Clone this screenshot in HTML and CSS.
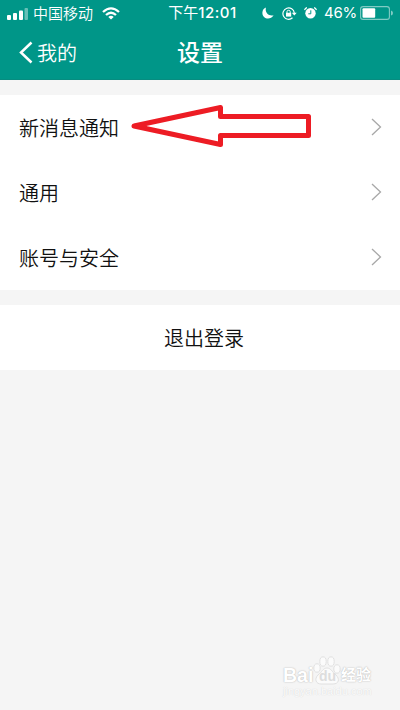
FILE: index.html
```html
<!DOCTYPE html>
<html lang="zh-CN">
<head>
<meta charset="utf-8">
<title>设置</title>
<link rel="stylesheet" href="styles.css">
</head>
<body>
<div class="screen">
  <header class="header">
    <div class="status">
      <div class="status-left">
        <svg class="signal" width="21" height="12" viewBox="0 0 21 12" fill="#fff"><rect x="0" y="7" width="4" height="5" rx="1"/><rect x="6" y="5" width="4" height="7" rx="1"/><rect x="12" y="2.500" width="4" height="9.500" rx="1"/><rect x="17.500" y="0" width="3.500" height="12" rx="1" opacity=".4"/></svg>
        <span class="carrier">中国移动</span>
        <svg class="wifi" width="18" height="13" viewBox="0 0 18 13" fill="none" stroke="#fff" stroke-width="2.300"><path d="M1 5Q9-2.300 17 5M4 8Q9 3.500 14 8"/><path d="M6.300 9.900Q9 7.500 11.700 9.900L9 12.600Z" fill="#fff" stroke="none"/></svg>
      </div>
      <span class="time">下午<b>12:01</b></span>
      <div class="status-right">
        <svg width="12" height="12" viewBox="0 0 12 12" fill="#fff"><path d="M4 .5C2.600 5.500 6.500 9.500 11.600 8.200C8 14 0 11.500.4 5.500C.5 3 2 1.200 4 .5Z"/></svg>
        <svg class="lock" width="15" height="13" viewBox="0 0 15 13" fill="none" stroke="#fff"><path d="M12.300 6A5.700 5.700 0 1 0 10.500 10.800" stroke-width="1.200"/><path d="M9.800 5.700H14.700L12.300 8.600Z" fill="#fff" stroke="none"/><rect x="4" y="5.800" width="5.200" height="3.800" fill="#fff" stroke="none"/><path d="M5 6V4.600Q5 3.300 6.600 3.300T8.200 4.600V6"/></svg>
        <svg class="alarm" width="13" height="12" viewBox="0 0 13 12"><circle cx="6.500" cy="6.300" r="5.200" fill="#fff"/><path d="M.6 3.200Q1 1.200 3 .7M10 .7Q12 1.200 12.400 3.200" fill="none" stroke="#fff" stroke-width="1.200"/><path d="M6.800 3.300V6.800H4.300" fill="none" stroke="#009688" stroke-width="1"/></svg>
        <span class="percent">46%</span>
        <svg class="battery" width="34" height="14" viewBox="0 0 34 14"><rect x=".6" y=".6" width="28.800" height="12.800" rx="2.500" fill="none" stroke="#fff" stroke-opacity=".5" stroke-width="1.100"/><rect x="2.500" y="2.200" width="12.700" height="9.600" rx="1" fill="#fff"/><path d="M31 4.500Q33 5 33 7T31 9.500Z" fill="#fff" opacity=".5"/></svg>
      </div>
    </div>
    <nav class="nav">
      <div class="back">
        <svg width="14" height="23" viewBox="0 0 14 23" fill="none" stroke="#fff" stroke-width="2.500"><path d="M12.500 1.500L2 11.500L12.500 21.500"/></svg>
        <span>我的</span>
      </div>
      <h1 class="title">设置</h1>
    </nav>
  </header>
  <main>
    <section class="group">
      <div class="row"><span>新消息通知</span><svg class="chevron" width="11" height="18" viewBox="0 0 11 18"><path d="M1 1L9.500 9L1 17"/></svg></div>
      <div class="row"><span>通用</span><svg class="chevron" width="11" height="18" viewBox="0 0 11 18"><path d="M1 1L9.500 9L1 17"/></svg></div>
      <div class="row"><span>账号与安全</span><svg class="chevron" width="11" height="18" viewBox="0 0 11 18"><path d="M1 1L9.500 9L1 17"/></svg></div>
    </section>
    <section class="group logout">退出登录</section>
  </main>
  <svg class="arrow" width="182" height="44" viewBox="0 0 182 44"><path d="M3 22L89.500 3.500V12.500H177.500V31.500H89.500V40.500L3 22L16 22" fill="none" stroke="#ed1c24" stroke-width="5" stroke-linejoin="round"/></svg>
  <div class="watermark">
    <div class="brand">
      <span class="bai">Bai</span>
      <span class="paw"><svg width="28" height="29" viewBox="0 0 28 29"><g class="pad"><ellipse cx="4" cy="12" rx="3.200" ry="4.200"/><ellipse cx="10" cy="5.500" rx="3.200" ry="4.700"/><ellipse cx="18" cy="5.500" rx="3.200" ry="4.700"/><ellipse cx="24" cy="13" rx="3.200" ry="4.200"/><path d="M14 12C10 12 9 16 5 19C1 23 3 28 8 28H20C26 28 27 23 23 19C19 16 18 12 14 12Z"/></g></svg><span class="du">du</span></span>
      <span class="jy">经验</span>
    </div>
    <div class="url">jingyan.baidu.com</div>
  </div>
</div>
</body>
</html>
```
FILE: styles.css
```css
* { box-sizing: border-box; }
body { margin: 0; font-family: "Noto Sans CJK SC", sans-serif; }
svg { display: block; flex: none; }
.screen { position: relative; width: 400px; height: 710px; overflow: hidden; background: #f5f5f5; }
.header { height: 80px; background: #009688; color: #fff; border-bottom: 1px solid #078c80; }
.status { height: 25px; display: grid; grid-template-columns: 160px 85px 1fr; align-items: center; line-height: 25px; }
.status-left { display: flex; align-items: center; padding-left: 7px; }
.signal { margin-top: 1px; }
.carrier { margin-left: 5px; padding-bottom: 2px; font-size: 15px; line-height: 23px; font-weight: 350; }
.wifi { margin-left: 9px; }
.time { padding-bottom: 1px; text-align: center; font-size: 15px; line-height: 24px; font-weight: 400; white-space: nowrap; }
.time b { font-family: Inter, sans-serif; font-weight: 500; font-size: 15px; letter-spacing: .5px; }
.status-right { display: flex; align-items: center; padding-left: 17px; }
.lock { margin-left: 8px; }
.alarm { margin-left: 7px; }
.percent { width: 32px; margin-left: 7px; padding-bottom: 1px; font: 400 15px/24px Inter, sans-serif; letter-spacing: -.2px; }
.battery { margin-left: 4px; }
.nav { height: 54px; display: grid; grid-template-columns: 1fr 100px 1fr; align-items: center; }
.back { display: flex; align-items: center; gap: 4px; padding: 1px 0 0 19px; font-size: 20px; line-height: 30px; font-weight: 350; }
.title { margin: 0; padding-bottom: 2px; text-align: center; font-size: 23px; line-height: 32px; font-weight: 500; }
.group { margin-top: 15px; background: #fff; color: #111; font-size: 20px; font-weight: 350; }
.row { height: 65px; padding: 0 18px 0 19px; display: flex; align-items: center; justify-content: space-between; }
.chevron { margin-bottom: 2px; }
.chevron path { fill: none; stroke: #a8a8a8; stroke-width: 1.3; }
.logout { height: 65px; display: flex; align-items: center; justify-content: center; padding-left: 8px; }
.arrow { position: absolute; left: 131px; top: 104px; }
.watermark { position: absolute; left: 283px; top: 655px; width: 90px; color: #fff; text-shadow: 0 0 1px #bbb, 0 0 2px #ccc; }
.brand { height: 30px; display: flex; align-items: flex-end; }
.bai { width: 30px; font: bold 19.5px/20px "Liberation Sans", sans-serif; }
.paw { position: relative; width: 28px; height: 29px; }
.pad { fill: #fbfbfb; stroke: #dedede; stroke-width: .9; }
.du { position: absolute; left: 6px; top: 12px; color: #ddd; font: bold 14px/16px "Liberation Sans", sans-serif; text-shadow: none; }
.jy { font-size: 15px; line-height: 22px; font-weight: 700; }
.url { color: #fcfcfc; font: 11px/12px "Liberation Sans", sans-serif; text-shadow: 0 0 1px #ccc; }
```
